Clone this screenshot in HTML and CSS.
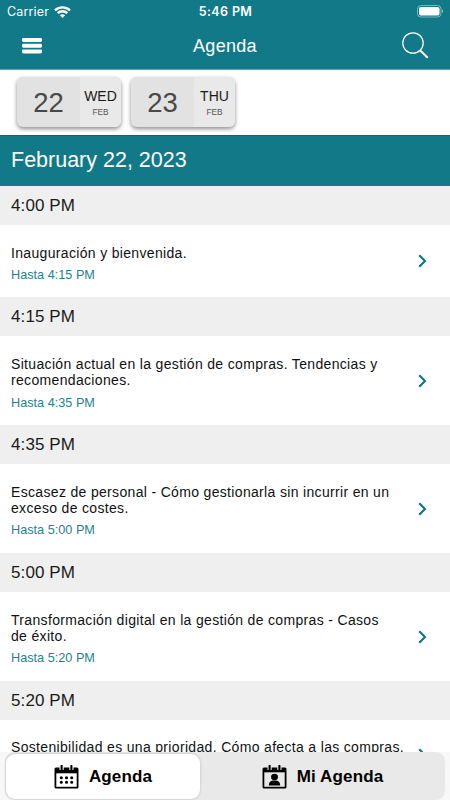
FILE: index.html
```html
<!DOCTYPE html>
<html lang="es">
<head>
  <meta charset="UTF-8" />
  <meta name="viewport" content="width=device-width, initial-scale=1.0"/>
  <title>Agenda</title>
  <link rel="stylesheet" href="styles.css">
</head>
<body>

  <header class="header">
    <div class="status-bar">
      <div class="carrier">
        <span>Carrier</span>
        <svg width="17" height="12" viewBox="0 0 17 12" fill="none" stroke="#fff" stroke-width="2.3">
          <path d="M1 4.3C5.2.3 11.8.3 16 4.3"/>
          <path d="M3.7 7.2c2.7-2.6 6.9-2.6 9.6 0"/>
          <path d="M8.5 11.9 5.9 9.2c1.5-1.3 3.7-1.3 5.2 0z" fill="#fff" stroke="none"/>
        </svg>
      </div>
      <span class="clock">5:46 PM</span>
      <svg class="battery" width="27" height="13" viewBox="0 0 27 13">
        <rect x=".5" y=".5" width="23.5" height="11.5" rx="3.4" fill="none" stroke="#fff" stroke-opacity=".45"/>
        <rect x="2" y="2" width="20.5" height="8.5" rx="1.8" fill="#fff"/>
        <path d="M25 4.5c1.6.6 1.6 3 0 3.6z" fill="#fff" fill-opacity=".55"/>
      </svg>
    </div>
    <div class="toolbar">
      <svg width="20" height="16" viewBox="0 0 20 16" fill="#fff">
        <rect y="0" width="20" height="4" rx="1.4"/>
        <rect y="5.7" width="20" height="4" rx="1.4"/>
        <rect y="11.4" width="20" height="4" rx="1.4"/>
      </svg>
      <h1>Agenda</h1>
      <svg width="27" height="27" viewBox="0 0 27 27" fill="none" stroke="#fff">
        <circle cx="11" cy="11" r="10.2" stroke-width="1.2"/>
        <path d="M18 18.3l7.7 7.5" stroke-width="2"/>
      </svg>
    </div>
  </header>

  <div class="days">
    <div class="day">
      <span class="day-number">22</span>
      <div class="day-name">WED<small>FEB</small></div>
    </div>
    <div class="day">
      <span class="day-number">23</span>
      <div class="day-name">THU<small>FEB</small></div>
    </div>
  </div>

  <h2 class="date">February 22, 2023</h2>

  <main class="sessions">
    <h3 class="time">4:00 PM</h3>
    <div class="session">
      <div class="session-text">
        <p class="title">Inauguración y bienvenida.</p>
        <p class="until">Hasta 4:15 PM</p>
      </div>
      <svg class="arrow" viewBox="0 0 9 14"><path d="M1.2 1.2 7 7l-5.8 5.8"/></svg>
    </div>

    <h3 class="time">4:15 PM</h3>
    <div class="session">
      <div class="session-text">
        <p class="title">Situación actual en la gestión de compras. Tendencias y<br>recomendaciones.</p>
        <p class="until">Hasta 4:35 PM</p>
      </div>
      <svg class="arrow" viewBox="0 0 9 14"><path d="M1.2 1.2 7 7l-5.8 5.8"/></svg>
    </div>

    <h3 class="time">4:35 PM</h3>
    <div class="session">
      <div class="session-text">
        <p class="title">Escasez de personal - Cómo gestionarla sin incurrir en un<br>exceso de costes.</p>
        <p class="until">Hasta 5:00 PM</p>
      </div>
      <svg class="arrow" viewBox="0 0 9 14"><path d="M1.2 1.2 7 7l-5.8 5.8"/></svg>
    </div>

    <h3 class="time">5:00 PM</h3>
    <div class="session">
      <div class="session-text">
        <p class="title">Transformación digital en la gestión de compras - Casos<br>de éxito.</p>
        <p class="until">Hasta 5:20 PM</p>
      </div>
      <svg class="arrow" viewBox="0 0 9 14"><path d="M1.2 1.2 7 7l-5.8 5.8"/></svg>
    </div>

    <h3 class="time">5:20 PM</h3>
    <div class="session last">
      <div class="session-text">
        <p class="title">Sostenibilidad es una prioridad. Cómo afecta a las compras.</p>
      </div>
      <svg class="arrow" viewBox="0 0 9 14"><path d="M1.2 1.2 7 7l-5.8 5.8"/></svg>
    </div>
  </main>

  <nav class="tabs">
    <div class="tab-group">
      <div class="tab active">
        <svg width="25" height="24" viewBox="0 0 24 24" preserveAspectRatio="none">
          <path d="M2 2.500h20A1.500 1.500 0 0 1 23.500 4v18a1.500 1.500 0 0 1-1.500 1.500H2A1.500 1.500 0 0 1 .5 22V4A1.500 1.500 0 0 1 2 2.500z"/>
          <path d="M2.200 8.300h19.600v13.500H2.200z" fill="#fff"/>
          <path d="M7.300 0v5M16.700 0v5" stroke="#fff" stroke-width="4"/>
          <path d="M7.300.8v4M16.700.8v4" stroke="#000" stroke-width="2" stroke-linecap="round"/>
          <path d="M7 12.700h.01M12 12.700h.01M17 12.700h.01M7 17.300h.01M12 17.300h.01M17 17.300h.01" stroke="#000" stroke-width="3" stroke-linecap="round"/>
        </svg>
        <span>Agenda</span>
      </div>
      <div class="tab">
        <svg width="25" height="24" viewBox="0 0 24 24" preserveAspectRatio="none">
          <path d="M2 2.500h20A1.500 1.500 0 0 1 23.500 4v18a1.500 1.500 0 0 1-1.500 1.500H2A1.500 1.500 0 0 1 .5 22V4A1.500 1.500 0 0 1 2 2.500z"/>
          <path d="M2.200 7.300h19.600v14.500H2.200z" fill="#e9e9e9"/>
          <path d="M7.300 0v5M16.700 0v5" stroke="#e9e9e9" stroke-width="4"/>
          <path d="M7.300.8v4M16.700.8v4" stroke="#000" stroke-width="2" stroke-linecap="round"/>
          <circle cx="12" cy="12" r="3.300"/>
          <path d="M6.500 20.500c0-3.200 1.600-4.700 4-5h3c2.400.3 4 1.800 4 5z"/>
        </svg>
        <span>Mi Agenda</span>
      </div>
    </div>
  </nav>

</body>
</html>
```

FILE: styles.css
```css
* {
  box-sizing: border-box;
}

body {
  margin: 0;
  height: 800px;
  display: flex;
  flex-direction: column;
  overflow: hidden;
  background: #fff;
  color: #1b1b1b;
  font-family: "Liberation Sans", Arial, sans-serif;
}

h1, h2, h3, p {
  margin: 0;
  font-weight: normal;
}

svg {
  display: block;
  flex: none;
}

/* Header */
.header {
  flex: none;
  height: 70px;
  background: #127989;
  border-bottom: 1px solid #6aa3ae;
  color: #fff;
}

.status-bar {
  display: grid;
  grid-template-columns: 1fr auto 1fr;
  align-items: center;
  height: 23px;
  padding: 0 6px 0 7px;
  font-family: Inter, sans-serif;
  font-size: 12.5px;
}

.carrier {
  display: flex;
  align-items: center;
  gap: 5px;
  letter-spacing: 0.15px;
}

.clock {
  font-weight: 600;
  letter-spacing: 0.35px;
}

.battery {
  justify-self: end;
}

.toolbar {
  display: flex;
  align-items: center;
  justify-content: space-between;
  height: 45px;
  padding: 0 21px 0 22px;
}

.toolbar h1 {
  padding-top: 2px;
  font-size: 18px;
  letter-spacing: 0.3px;
  margin-left: 6px;
}

/* Day picker */
.days {
  flex: none;
  display: flex;
  gap: 10px;
  height: 65px;
  padding: 7px 17px;
}

.day {
  display: flex;
  width: 104px;
  height: 50px;
  border-radius: 6px;
  background: #e2e2e2;
  overflow: hidden;
  box-shadow: 0 2px 4px rgba(0, 0, 0, 0.45);
}

.day-number {
  width: 63px;
  line-height: 52px;
  text-align: center;
  font-size: 27.5px;
  color: #484848;
}

.day-name {
  flex: 1;
  display: flex;
  flex-direction: column;
  align-items: center;
  padding-top: 11px;
  background: #e9e9e9;
  font-size: 14px;
  line-height: 16px;
}

.day-name small {
  font-size: 8.3px;
  color: #555;
}

/* Sessions */
.date {
  flex: none;
  height: 51px;
  padding-left: 11px;
  background: #127989;
  border-top: 1px solid #08677a;
  color: #fff;
  font-size: 21.5px;
  line-height: 49px;
}

.sessions {
  flex: 1;
  min-height: 0;
  overflow: hidden;
}

.time {
  height: 39px;
  padding-left: 11px;
  background: #efefef;
  font-size: 17px;
  line-height: 39px;
  letter-spacing: 0.1px;
}

.session {
  display: flex;
  align-items: center;
  justify-content: space-between;
  padding: 19.5px 23px 13.2px 11px;
}

.title {
  font-size: 14px;
  line-height: 16.3px;
  letter-spacing: 0.33px;
  color: #111;
  white-space: nowrap;
}

.until {
  margin-top: 6px;
  font-size: 12.7px;
  line-height: 17.5px;
  color: #287f8e;
}

.arrow {
  width: 9px;
  height: 14px;
  margin-bottom: 6px;
  fill: none;
  stroke: #08758a;
  stroke-width: 2.1;
}

/* cut off by the tab bar */
.session.last {
  align-items: flex-start;
}

.session.last .arrow {
  margin-top: 9px;
}

/* Bottom tabs */
.tabs {
  flex: none;
  height: 48px;
  padding: 0 5px;
  background: #f8f8f8;
}

.tab-group {
  display: flex;
  height: 48px;
  padding: 2px 0 1px 1px;
  border-radius: 9px;
  background: #e9e9e9;
}

.tab {
  flex: 1;
  display: flex;
  align-items: center;
  justify-content: center;
  gap: 10px;
  color: #000;
  font-size: 17px;
  font-weight: bold;
  letter-spacing: 0.15px;
}

.tab.active {
  flex: none;
  width: 194px;
  border-radius: 9px;
  background: #fff;
  box-shadow: 0 0 3px rgba(0, 0, 0, 0.2);
}
```
